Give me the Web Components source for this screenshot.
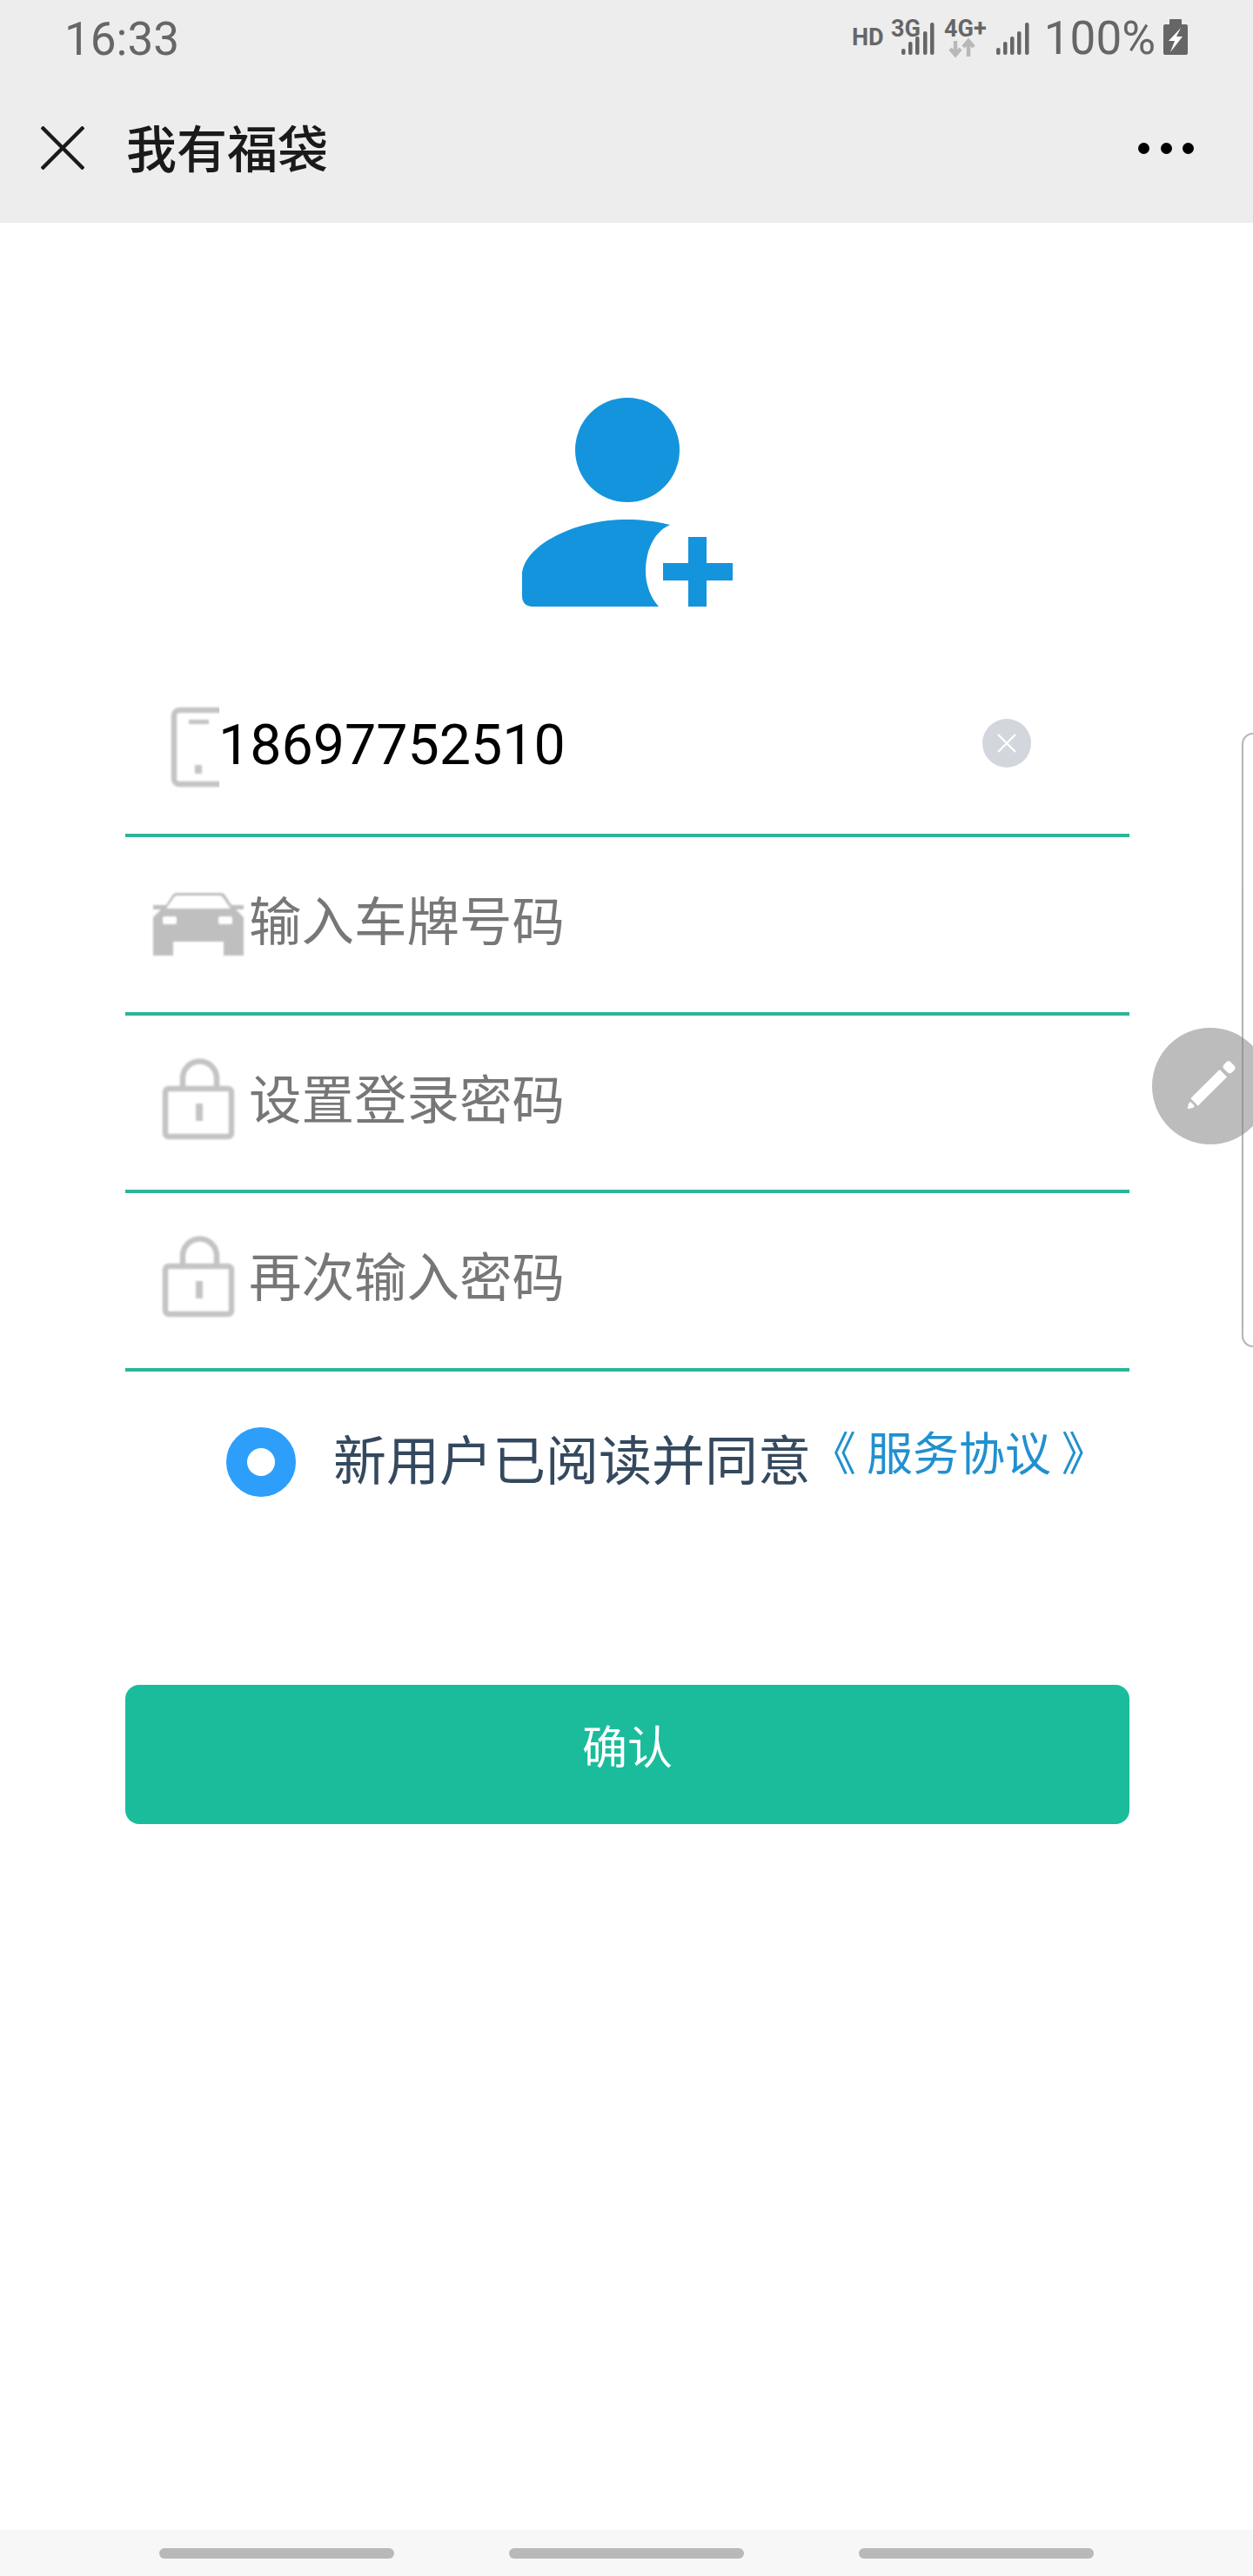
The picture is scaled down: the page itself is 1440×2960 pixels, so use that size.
<!DOCTYPE html>
<html lang="zh">
<head>
<meta charset="utf-8">
<title>我有福袋</title>
<style>
  html, body { margin: 0; padding: 0; background: #fff; }
  body { width: 1440px; height: 2960px; overflow: hidden; font-family: Roboto, "Noto Sans CJK SC", sans-serif; }
  app-page { height: 2960px; }
</style>
</head>
<body>
<template id="tpl-field">
  <style>
    :host { display: flex; height: 200.4px; border-bottom: 4px solid #2db598; position: relative; }
    .icon { flex: none; display: flex; }
    .text { font: 60.5px/1 "Noto Sans CJK SC", Roboto, sans-serif; color: #777; padding-top: 63px; white-space: nowrap; }
    :host([filled]) .text { font: 64.5px/1 Roboto, "Noto Sans CJK SC", sans-serif; color: #000; padding-top: 66px; margin-left: -1px; }
  </style>
  <div class="icon"><slot name="icon"></slot></div>
  <div class="text"><slot></slot></div>
  <slot name="action"></slot>
</template>
<script>
class StatusBar extends HTMLElement {
  constructor() {
    super();
    this.attachShadow({ mode: 'open' }).innerHTML = `
      <style>
        :host { display: flex; height: 90px; padding: 0 75px 0 74px; color: #666; align-items: center; justify-content: space-between; }
        .time { font: 53px/1 Roboto, sans-serif; }
        .right { display: flex; align-items: flex-start; height: 90px; }
        .pct { font: 53px/1 Roboto, sans-serif; margin: 18px 9px 0 8px; }
        svg { display: block; }
        text { font-family: Roboto, sans-serif; font-weight: 700; fill: #666; font-size: 27px; }
      </style>
      <div class="time">16:33</div>
      <div class="right">
        <svg width="220" height="90" viewBox="970 0 220 90">
          <text x="977" y="52">HD</text>
          <text x="1022" y="42">3G</text>
          <g fill="#666">
            <rect x="1034" y="56" width="4.5" height="7" rx="2"/><rect x="1042" y="48" width="4.5" height="15" rx="2"/><rect x="1050" y="42" width="4.5" height="21" rx="2"/><rect x="1059" y="36" width="4.5" height="27" rx="2"/><rect x="1067" y="26" width="4.5" height="37" rx="2"/>
          </g>
          <text x="1083" y="42">4G+</text>
          <path d="M1096 47v15M1090 56l6 7 6-7M1111 65v-15M1105 54l6-7 6 7" fill="none" stroke="#b8b8b8" stroke-width="4.4"/>
          <g fill="#666">
            <rect x="1143" y="55" width="4.5" height="8" rx="2"/><rect x="1151" y="48" width="4.5" height="15" rx="2"/><rect x="1159" y="42" width="4.5" height="21" rx="2"/><rect x="1167" y="36" width="4.5" height="27" rx="2"/><rect x="1176" y="26" width="4.5" height="37" rx="2"/>
          </g>
        </svg>
        <div class="pct">100%</div>
        <svg width="28" height="41" viewBox="0 0 28 41" style="margin-top:22px">
          <path d="M8 0h12a1 1 0 0 1 1 1v5h5a2 2 0 0 1 2 2v31a2 2 0 0 1-2 2H2a2 2 0 0 1-2-2V8a2 2 0 0 1 2-2h5V1a1 1 0 0 1 1-1z" fill="#666"/>
          <path d="M20 10L6 25h7l-5 13 14-18h-7l5-10z" fill="#fff"/>
        </svg>
      </div>`;
  }
}

class TitleBar extends HTMLElement {
  constructor() {
    super();
    this.attachShadow({ mode: 'open' }).innerHTML = `
      <style>
        :host { display: flex; align-items: center; height: 166px; padding: 0 0 0 47px; color: #1a1a1a; position: relative; }
        .title { font: 500 58px/1 "Noto Sans CJK SC", sans-serif; margin-left: 48px; margin-top: -10px; }
        .close { display: block; margin-top: -6px; }
        .more { position: absolute; right: 68px; top: 74px; display: flex; gap: 12.3px; }
        .more i { display: block; width: 13px; height: 13px; border-radius: 50%; background: #000; }
      </style>
      <svg class="close" width="50" height="50" viewBox="0 0 50 50"><path d="M1 1l48 48M49 1L1 49" stroke="#1a1a1a" stroke-width="4.4" fill="none"/></svg>
      <div class="title"><slot></slot></div>
      <div class="more"><i></i><i></i><i></i></div>`;
  }
}

class FormField extends HTMLElement {
  constructor() {
    super();
    this.attachShadow({ mode: 'open' }).appendChild(document.getElementById('tpl-field').content.cloneNode(true));
  }
}

class AgreeRow extends HTMLElement {
  constructor() {
    super();
    this.attachShadow({ mode: 'open' }).innerHTML = `
      <style>
        :host { display: flex; align-items: center; height: 208px; padding-left: 116px; }
        .radio { width: 80px; height: 80px; box-sizing: border-box; border-radius: 50%; border: 24px solid #2d9ffb; flex: none; background: #fff; }
        .label { font: 61px/1 "Noto Sans CJK SC", sans-serif; color: #34495e; margin-left: 43px; white-space: nowrap; margin-top: -10px; }
        .link { font: 53px/1 "Noto Sans CJK SC", sans-serif; color: #2190cf; white-space: nowrap; margin-left: -1px; margin-top: -24px; }
      </style>
      <div class="radio"></div>
      <div class="label"><slot></slot></div>
      <div class="link"><slot name="link"></slot></div>`;
  }
}

class ConfirmButton extends HTMLElement {
  constructor() {
    super();
    this.attachShadow({ mode: 'open' }).innerHTML = `
      <style>
        :host { display: flex; height: 160px; margin-top: 152px; background: #1abc9c; border-radius: 16px; color: #fff; justify-content: center; font: 52px/1 "Noto Sans CJK SC", sans-serif; padding-top: 43px; box-sizing: border-box; }
      </style>
      <slot></slot>`;
  }
}

class NavBar extends HTMLElement {
  constructor() {
    super();
    this.attachShadow({ mode: 'open' }).innerHTML = `
      <style>
        :host { display: flex; position: absolute; left: 0; right: 0; bottom: 0; height: 53px; background: #f7f7f7; gap: 132px; padding: 21px 0 0 183px; box-sizing: border-box; }
        i { display: block; width: 270px; height: 12px; border-radius: 6px; background: #b9b9b9; }
      </style>
      <i></i><i></i><i></i>`;
  }
}

class EdgePanel extends HTMLElement {
  constructor() {
    super();
    this.attachShadow({ mode: 'open' }).innerHTML = `
      <style>
        :host { display: block; position: absolute; left: 1427px; top: 842px; width: 13px; height: 706px; box-sizing: border-box; border: 2px solid rgba(130,130,130,.6); border-right: 0; border-radius: 14px 0 0 14px; }
      </style>`;
  }
}

class EditFab extends HTMLElement {
  constructor() {
    super();
    this.attachShadow({ mode: 'open' }).innerHTML = `
      <style>
        :host { display: flex; align-items: center; justify-content: center; position: absolute; left: 1324px; top: 1181px; width: 134px; height: 134px; border-radius: 50%; background: #bcbcbc; }
        svg { display: block; }
      </style>
      <svg width="80" height="80" viewBox="-40 -40 80 80">
        <g transform="rotate(-45)" fill="#fff">
          <path d="M-37 0l5-3.500h3v7h-3z"/>
          <path d="M-26 -6L-21 -6H21V6H-21L-26 6z"/>
          <rect x="25" y="-6.500" width="11" height="13" rx="4"/>
        </g>
      </svg>`;
  }
}

class AppPage extends HTMLElement {
  constructor() {
    super();
    this.attachShadow({ mode: 'open' }).innerHTML = `
      <style>
        :host { display: block; position: relative; overflow: hidden; background: #fff; }
        header { background: #ededed; height: 256px; }
        .avatar { display: flex; padding: 201px 0 0 600px; height: 301px; }
        .avatar svg { display: block; }
        main { padding: 0 142px 0 144px; }
      </style>
      <header><slot name="head"></slot></header>
      <div class="avatar">
        <svg width="244" height="242" viewBox="0 0 244 242">
          <circle cx="121" cy="60" r="60" fill="#1494dc"/>
          <path d="M0 205C0 170 60 140 120 140c20 0 38 3 50 6-20 9-28 32-28 54 0 15 6 30 15 40H12C4 240 0 235 0 228z" fill="#1494dc"/>
          <path d="M191 160h21v30h30v20h-30v30h-21v-30h-29v-20h29z" fill="#1494dc"/>
        </svg>
      </div>
      <main><slot></slot></main>
      <slot name="over"></slot>`;
  }
}

customElements.define('status-bar', StatusBar);
customElements.define('title-bar', TitleBar);
customElements.define('form-field', FormField);
customElements.define('agree-row', AgreeRow);
customElements.define('confirm-button', ConfirmButton);
customElements.define('nav-bar', NavBar);
customElements.define('edge-panel', EdgePanel);
customElements.define('edit-fab', EditFab);
customElements.define('app-page', AppPage);
</script>

<app-page>
  <div slot="head">
    <status-bar></status-bar>
    <title-bar>我有福袋</title-bar>
  </div>

  <form-field filled>
    <svg slot="icon" width="108" height="200" viewBox="0 0 108 200" style="display:block">
      <g style="filter:blur(.9px)">
        <path d="M116 58H62a6 6 0 0 0-6 6v73a6 6 0 0 0 6 6h54" fill="none" stroke="#c4c4c4" stroke-width="6.5"/>
        <rect x="73" y="69" width="23" height="5" fill="#c4c4c4"/>
        <rect x="80" y="121" width="8" height="10" fill="#c4c4c4"/>
      </g>
    </svg>
    18697752510
    <svg slot="action" width="56" height="56" viewBox="0 0 56 56" style="position:absolute;left:985px;top:68px;display:block">
      <circle cx="28" cy="28" r="28" fill="#d3d6dc"/>
      <path d="M18 18l20 20M38 18L18 38" stroke="#fff" stroke-width="2.4" fill="none"/>
    </svg>
  </form-field>

  <form-field>
    <svg slot="icon" width="142" height="200" viewBox="0 0 142 200" style="display:block">
      <g style="filter:blur(.9px)">
        <path d="M32 78h15l7-11c1-2 3-3 6-3h49c3 0 5 1 6 3l7 11h14v5h-9l9 9v44h-23v-16H55v16H32V92l9-9h-9z" fill="#bfbfbf"/>
        <path d="M47 82l9-13c1-1 2-2 4-2h48c2 0 3 1 4 2l9 13z" fill="#fff"/>
        <rect x="43" y="91" width="16" height="9" rx="2" fill="#fff"/><rect x="107" y="91" width="16" height="9" rx="2" fill="#fff"/>
      </g>
    </svg>
    输入车牌号码
  </form-field>

  <form-field>
    <svg slot="icon" width="142" height="200" viewBox="0 0 142 200" style="display:block">
      <g style="filter:blur(.9px)">
        <g fill="none" stroke="#c4c4c4" stroke-width="6.5"><rect x="46" y="84" width="76" height="55" rx="4"/><path d="M66 84V72a19.500 19.500 0 0 1 39 0v12"/></g>
        <rect x="81" y="101" width="8" height="20" fill="#c4c4c4"/>
      </g>
    </svg>
    设置登录密码
  </form-field>

  <form-field>
    <svg slot="icon" width="142" height="200" viewBox="0 0 142 200" style="display:block">
      <g style="filter:blur(.9px)">
        <g fill="none" stroke="#c4c4c4" stroke-width="6.5"><rect x="46" y="84" width="76" height="55" rx="4"/><path d="M66 84V72a19.500 19.500 0 0 1 39 0v12"/></g>
        <rect x="81" y="101" width="8" height="20" fill="#c4c4c4"/>
      </g>
    </svg>
    再次输入密码
  </form-field>

  <agree-row>新用户已阅读并同意<span slot="link">《 服务协议 》</span></agree-row>
  <confirm-button>确认</confirm-button>

  <edit-fab slot="over"></edit-fab>
  <edge-panel slot="over"></edge-panel>
  <nav-bar slot="over"></nav-bar>
</app-page>
</body>
</html>
